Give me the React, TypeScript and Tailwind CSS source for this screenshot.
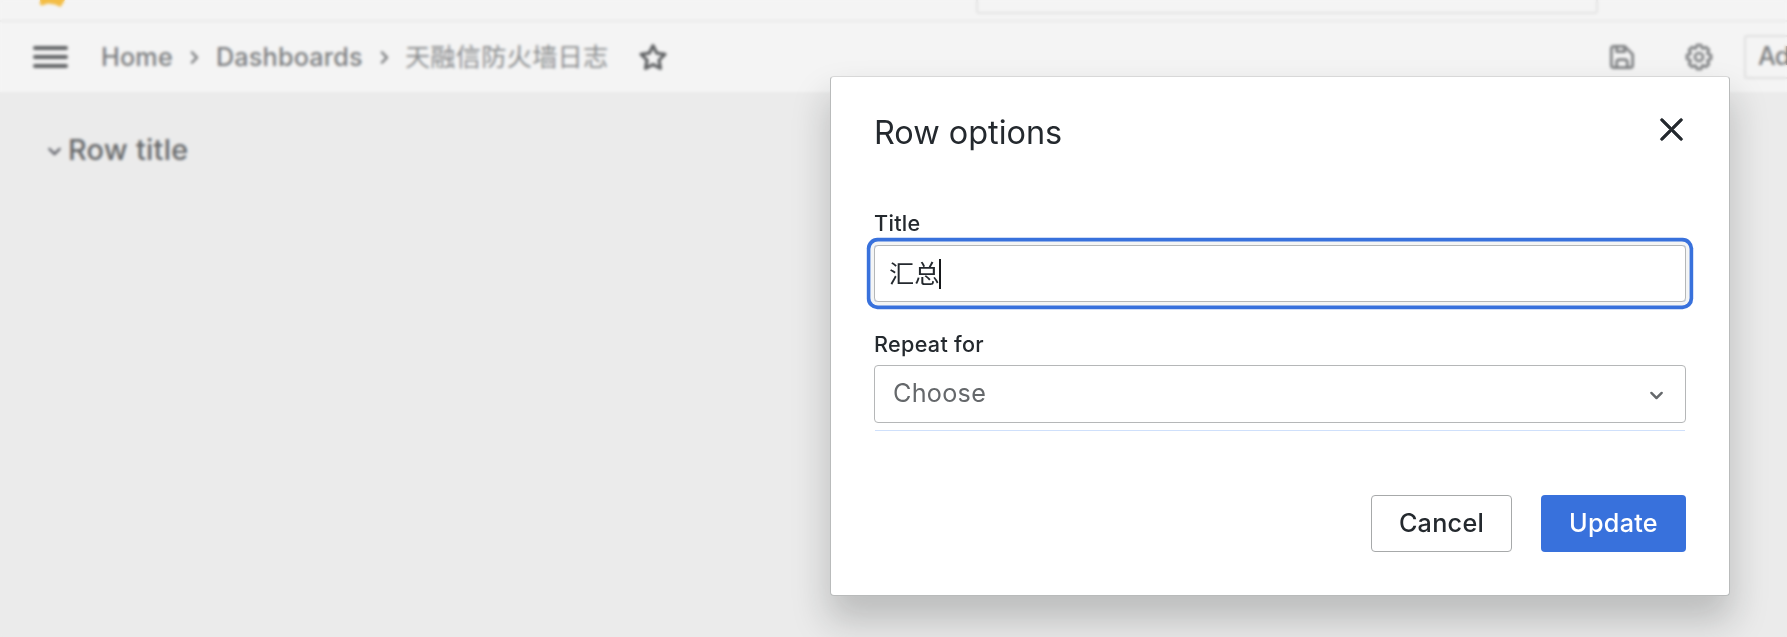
import React from "react";

const paths = {
  times:
    "M13.41,12l6.3-6.29a1,1,0,1,0-1.42-1.42L12,10.59,5.71,4.29A1,1,0,0,0,4.29,5.71L10.59,12l-6.3,6.29a1,1,0,0,0,0,1.42,1,1,0,0,0,1.42,0L12,13.41l6.29,6.3a1,1,0,0,0,1.42,0,1,1,0,0,0,0-1.42Z",
  angleDown:
    "M17,9.17a1,1,0,0,0-1.41,0L12,12.71,8.46,9.17a1,1,0,0,0-1.41,0,1,1,0,0,0,0,1.42l4.24,4.24a1,1,0,0,0,1.42,0L17,10.59A1,1,0,0,0,17,9.17Z",
  angleRight:
    "M14.83,11.29,10.59,7.05a1,1,0,0,0-1.42,0,1,1,0,0,0,0,1.41L12.71,12,9.17,15.54a1,1,0,0,0,0,1.41,1,1,0,0,0,.71.29,1,1,0,0,0,.71-.29l4.24-4.24A1,1,0,0,0,14.83,11.29Z",
  star:
    "M22,9.67A1,1,0,0,0,21.14,9l-5.69-.83L12.9,3a1,1,0,0,0-1.8,0L8.55,8.16,2.86,9a1,1,0,0,0-.81.68,1,1,0,0,0,.25,1l4.13,4-1,5.68A1,1,0,0,0,6.9,21.44L12,18.77l5.1,2.67a.93.93,0,0,0,.46.12,1,1,0,0,0,.59-.19,1,1,0,0,0,.4-1l-1-5.68,4.13-4A1,1,0,0,0,22,9.67Zm-6.15,4a1,1,0,0,0-.29.88l.72,4.2-3.76-2a1.06,1.06,0,0,0-.94,0l-3.76,2,.72-4.2a1,1,0,0,0-.29-.88l-3-3,4.21-.61a1,1,0,0,0,.76-.55L12,5.7l1.88,3.82a1,1,0,0,0,.76.55l4.21.61Z",
  save:
    "m20.71 9.29-6-6a1 1 0 0 0-.32-.21A1.09 1.09 0 0 0 14 3H6a3 3 0 0 0-3 3v12a3 3 0 0 0 3 3h12a3 3 0 0 0 3-3v-8a1 1 0 0 0-.29-.71zM9 5h4v2H9zm6 14H9v-3a1 1 0 0 1 1-1h4a1 1 0 0 1 1 1zm4-1a1 1 0 0 1-1 1h-1v-3a3 3 0 0 0-3-3h-4a3 3 0 0 0-3 3v3H6a1 1 0 0 1-1-1V6a1 1 0 0 1 1-1h1v3a1 1 0 0 0 1 1h6a1 1 0 0 0 1-1V6.41l4 4z",
  cog:
    "M21.32,9.55l-1.89-.63.89-1.78A1,1,0,0,0,20.13,6L18,3.87a1,1,0,0,0-1.15-.19l-1.78.89-.63-1.89A1,1,0,0,0,13.5,2h-3a1,1,0,0,0-.95.68L8.92,4.57,7.14,3.68A1,1,0,0,0,6,3.87L3.87,6a1,1,0,0,0-.19,1.15l.89,1.78-1.89.63A1,1,0,0,0,2,10.5v3a1,1,0,0,0,.68.95l1.89.63-.89,1.78A1,1,0,0,0,3.87,18L6,20.13a1,1,0,0,0,1.15.19l1.78-.89.63,1.89a1,1,0,0,0,.95.68h3a1,1,0,0,0,.95-.68l.63-1.89,1.78.89A1,1,0,0,0,18,20.13L20.13,18a1,1,0,0,0,.19-1.15l-.89-1.78,1.89-.63A1,1,0,0,0,22,13.5v-3A1,1,0,0,0,21.32,9.55ZM20,12.78l-1.2.4A2,2,0,0,0,17.64,16l.57,1.14-1.1,1.1L16,17.64a2,2,0,0,0-2.79,1.16l-.4,1.2H11.22l-.4-1.2A2,2,0,0,0,8,17.64l-1.14.57-1.1-1.1L6.36,16A2,2,0,0,0,5.2,13.18L4,12.78V11.22l1.2-.4A2,2,0,0,0,6.36,8L5.79,6.89l1.1-1.1L8,6.36A2,2,0,0,0,10.82,5.2l.4-1.2h1.56l.4,1.2A2,2,0,0,0,16,6.36l1.14-.57,1.1,1.1L17.64,8a2,2,0,0,0,1.16,2.79l1.2.4ZM12,8a4,4,0,1,0,4,4A4,4,0,0,0,12,8Zm0,6a2,2,0,1,1,2-2A2,2,0,0,1,12,14Z",
};

function Icon({ name, className }: { name: keyof typeof paths; className: string }) {
  return (
    <svg viewBox="0 0 24 24" fill="currentColor" className={`shrink-0 ${className}`}>
      <path d={paths[name]} />
    </svg>
  );
}

function TopBar() {
  return (
    <div className="flex h-[22px] items-start border-b-2 border-[#e9e9e9] pl-10">
      <svg viewBox="0 0 25 7" className="h-[7px] w-[25px] shrink-0" fill="#f3bd45">
        <path d="M0 0H25L20.5 7L15 4.6L8 3.6L2 5.6L0 4.8Z" />
      </svg>
      <div className="ml-[911px] h-[14px] w-[622px] rounded-b-[3px] border-2 border-t-0 border-[#e3e3e3]" />
    </div>
  );
}

function Toolbar() {
  return (
    <div className="flex h-[70px] items-center overflow-hidden text-[25.2px] font-medium tracking-[0.2px] text-[#7c7e80]">
      <button aria-label="Menu" className="ml-[33px] flex w-[35px] shrink-0 flex-col gap-[5px]">
        <span className="h-1 rounded-full bg-[#606264]" />
        <span className="h-1 rounded-full bg-[#606264]" />
        <span className="h-1 rounded-full bg-[#606264]" />
      </button>
      <nav className="ml-[33px] flex shrink-0 items-center whitespace-nowrap pt-px">
        <span>Home</span>
        <Icon name="angleRight" className="mx-[7px] mt-px size-[29px]" />
        <span>Dashboards</span>
        <Icon name="angleRight" className="mx-[7px] mt-px size-[29px]" />
        <span className="-ml-px pt-px font-normal tracking-[0.27px] text-[#8a8c8e]">天融信防火墙日志</span>
      </nav>
      <Icon name="star" className="ml-[28px] size-[32px] stroke-current stroke-[0.4] text-[#5c5e60]" />
      <div className="ml-auto flex shrink-0 items-center">
        <Icon name="save" className="size-[32px]" />
        <Icon name="cog" className="ml-[45px] size-[32px]" />
        <div className="ml-[29px] flex h-[44px] w-[43px] shrink-0 items-center whitespace-nowrap rounded-l-[3px] border-2 border-r-0 border-[#e0e0e0] pl-[12px] tracking-[-0.8px]">
          Ad
        </div>
      </div>
    </div>
  );
}

function RowOptions() {
  return (
    <div
      role="dialog"
      className="absolute left-[830px] top-[76px] flex h-[520px] w-[900px] flex-col rounded-[4px] border border-[#b9bbbb] border-t-[#d8d8d8] bg-white px-[43px] text-[#24292e] shadow-[0_23px_36px_2px_rgba(24,26,27,0.22)]"
    >
      <div className="flex h-[110px] items-center justify-between">
        <h2 className="pt-[2px] text-[32.4px] leading-[40px]">Row options</h2>
        <button aria-label="Close" className="-mr-[2px] -mt-[6px]">
          <Icon name="times" className="size-[33px] stroke-current stroke-[0.5]" />
        </button>
      </div>
      <label className="mt-[23px] h-[35px] text-[21.6px] font-medium leading-[26px] tracking-[0.3px]">Title</label>
      <div className="flex h-[57px] items-center rounded-[4px] border border-[#b5b7b8] pl-[14px] text-[25.2px] shadow-[0_0_0_3.6px_#f4f5f5,0_0_0_7.2px_#3871dc]">
        <span className="pt-[2px]">汇总</span>
        <span className="h-[30px] w-[2px] bg-[#17191b]" />
      </div>
      <label className="mt-[29px] h-[34px] text-[21.6px] font-medium leading-[26px] tracking-[0.3px]">Repeat for</label>
      <div className="flex h-[58px] items-center justify-between rounded-[4px] border border-[#b5b7b8] pl-[18px] pr-[14px] text-[25.2px] tracking-[0.27px] text-[#65686b]">
        Choose
        <Icon name="angleDown" className="mt-[2px] size-[29px]" />
      </div>
      <div className="mx-px mt-[7px] h-px bg-[#cfe0fb]" />
      <div className="mt-[64px] flex justify-end gap-[29px] text-[25.2px] font-medium tracking-[0.27px]">
        <button className="h-[57px] w-[141px] rounded-[4px] border border-[#a7a9aa]">Cancel</button>
        <button className="h-[57px] w-[145px] rounded-[4px] bg-[#3871dc] text-white">Update</button>
      </div>
    </div>
  );
}

export default function App() {
  return (
    <div className="relative h-[637px] w-[1787px] overflow-hidden bg-[#ebebeb] font-['Inter','Noto_Sans_CJK_SC',sans-serif]">
      <header className="bg-[#f4f4f4]">
        <TopBar />
        <Toolbar />
      </header>
      <main className="flex items-center pl-[40px] pt-[37px] text-[#666870]">
        <Icon name="angleDown" className="mt-[3px] size-[29px]" />
        <h3 className="-ml-px text-[28.8px] font-medium leading-[42px] tracking-[0.3px] text-[#66686a]">Row title</h3>
      </main>
      <div className="absolute inset-0 backdrop-blur-[1.8px]" />
      <RowOptions />
    </div>
  );
}
